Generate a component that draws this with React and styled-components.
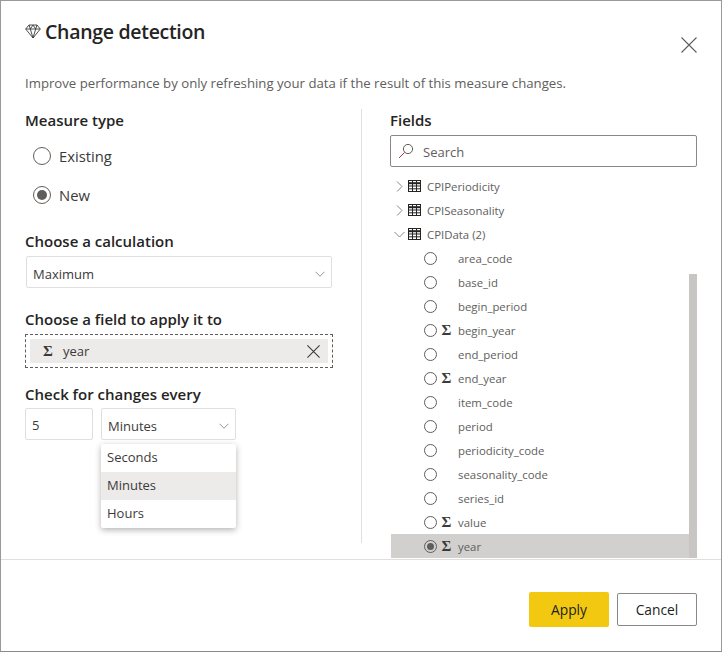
import React from "react";
import styled, { createGlobalStyle } from "styled-components";

const Global = createGlobalStyle`
  html, body { margin: 0; padding: 0; background: #fff; }
  body { font-family: "Open Sans", "Noto Sans", "Liberation Sans", sans-serif; }
`;

const Dialog = styled.div`
  box-sizing: border-box;
  width: 722px;
  height: 652px;
  border: 1px solid #999;
  border-bottom-color: #8a8a8a;
  background: #fff;
  display: flex;
  flex-direction: column;
  color: #252423;
  position: relative;
`;
const Header = styled.header`
  height: 49px;
  padding: 0 24px;
  display: flex;
  align-items: flex-end;
  gap: 4px;
`;
const Title = styled.h1`
  margin: 0;
  font-size: 19.5px;
  line-height: 28px;
  font-weight: 600;
  letter-spacing: -0.3px;
  height: 32px;
  color: #252423;
`;
const DiamondWrap = styled.span`
  display: flex;
  height: 23px;
  align-self: flex-start;
  margin-top: 23px;
`;
const CloseBtn = styled.button`
  position: absolute;
  right: 24px;
  top: 36px;
  width: 16px;
  height: 16px;
  padding: 0;
  border: 0;
  background: none;
  display: flex;
`;
const Description = styled.p`
  margin: 23px 24px 0;
  font-size: 13.2px;
  line-height: 20px;
  color: #605e5c;
`;
const Body = styled.div`
  display: grid;
  grid-template-columns: 361px 1fr;
  margin-top: 16px;
  height: 450px;
`;
const Left = styled.section`
  box-sizing: border-box;
  padding: 0 0 0 24px;
  height: 434px;
  width: 361px;
  border-right: 1px solid #e1dfdd;
`;
const Right = styled.section`
  padding-left: 28px;
  padding-right: 24px;
  position: relative;
`;
const Label = styled.h2`
  margin: ${p => p.$mt || 0}px 0 0;
  font-size: 15px;
  line-height: 22px;
  font-weight: 600;
  color: #252423;
`;
const RadioRow = styled.div`
  display: flex;
  align-items: center;
  gap: 8px;
  height: 20px;
  margin: ${p => p.$mt}px 0 0 8px;
  font-size: 14.8px;
  color: #3b3a39;
`;
const Radio = styled.span`
  box-sizing: border-box;
  flex: none;
  width: ${p => p.$size || 18}px;
  height: ${p => p.$size || 18}px;
  border-radius: 50%;
  border: 1.2px solid #605e5c;
  display: flex;
  align-items: center;
  justify-content: center;
  &::after {
    content: "";
    display: ${p => (p.$on ? "block" : "none")};
    width: ${p => (p.$size ? 7 : 10)}px;
    height: ${p => (p.$size ? 7 : 10)}px;
    border-radius: 50%;
    background: #605e5c;
  }
`;
const Select = styled.div`
  box-sizing: border-box;
  width: ${p => p.$w}px;
  height: 32px;
  margin: ${p => p.$mt || 0}px 0 0 ${p => p.$ml || 0}px;
  border: 1px solid #e1dfdd;
  border-radius: 2px;
  padding: 3px 6px 0;
  display: flex;
  align-items: center;
  justify-content: space-between;
  font-size: 13px;
  color: #3b3a39;
`;
const Well = styled.div`
  box-sizing: border-box;
  width: 308px;
  height: 34px;
  margin-top: 4px;
  border: 1px dashed #605e5c;
  padding: 4px;
`;
const Chip = styled.div`
  height: 24px;
  background: #edebe9;
  display: flex;
  align-items: center;
  padding: 0 8px 0 12px;
  font-size: 13px;
  color: #3b3a39;
  border-radius: 1px;
`;
const Sigma = styled.span`
  font-family: "Liberation Serif", "DejaVu Serif", serif;
  font-size: 15px;
  line-height: 1;
  font-weight: 700;
  color: #3b3a39;
  width: ${p => p.$w}px;
  text-align: center;
  flex: none;
`;
const ChipText = styled.span`
  margin-left: 9px;
  flex: 1;
`;
const IntervalRow = styled.div`
  display: flex;
  gap: 8px;
  margin-top: 3px;
`;
const NumberBox = styled.div`
  box-sizing: border-box;
  width: 68px;
  height: 32px;
  border: 1px solid #e1dfdd;
  border-radius: 2px;
  padding: 2px 6px 0;
  display: flex;
  align-items: center;
  font-size: 13px;
  color: #3b3a39;
`;
const Menu = styled.ul`
  position: absolute;
  left: 100px;
  top: 443px;
  width: 135px;
  margin: 0;
  padding: 0;
  list-style: none;
  background: #fff;
  border-radius: 2px;
  box-shadow: 0 2px 6px rgba(0,0,0,.3);
`;
const MenuItem = styled.li`
  box-sizing: border-box;
  height: 28px;
  padding: 0 6px 2px;
  display: flex;
  align-items: center;
  font-size: 13px;
  color: #3b3a39;
  background: ${p => (p.$active ? "#edebe9" : "transparent")};
`;
const Search = styled.div`
  box-sizing: border-box;
  height: 32px;
  margin-top: 4px;
  width: 307px;
  border: 1px solid #8a8886;
  border-radius: 2px;
  display: flex;
  align-items: center;
  padding-left: 7px;
  gap: 9px;
  font-size: 13px;
  color: #605e5c;
`;
const SearchText = styled.span`
  padding-top: 2px;
`;
const Tree = styled.div`
  margin-top: 7px;
  width: 307px;
`;
const Row = styled.div`
  height: 24px;
  display: flex;
  align-items: center;
  width: 298px;
  margin-left: 1px;
  font-size: 11.4px;
  color: #605e5c;
  background: ${p => (p.$sel ? "#d2d0ce" : "transparent")};
`;
const GroupRow = styled(Row)`
  padding-left: 3px;
  box-sizing: border-box;
  gap: 3px;
`;
const GroupName = styled.span`
  margin-left: 3px;
`;
const Expander = styled.span`
  width: 11px;
  display: flex;
  justify-content: center;
  flex: none;
`;
const FieldRow = styled(Row)`
  box-sizing: border-box;
  padding-left: 33px;
`;
const FieldIcon = styled.span`
  width: 11px;
  margin-left: 4px;
  flex: none;
  display: flex;
  justify-content: center;
`;
const FieldName = styled.span`
  margin-left: 6px;
`;
const ScrollThumb = styled.div`
  position: absolute;
  left: 327px;
  top: 165px;
  width: 8px;
  height: 284px;
  background: #c8c6c4;
`;
const Footer = styled.footer`
  border-top: 1px solid #e1dfdd;
  flex: 1;
  display: flex;
  justify-content: flex-end;
  align-items: flex-start;
  gap: 8px;
  padding: 32px 24px 0 0;
`;
const Button = styled.button`
  box-sizing: border-box;
  width: 80px;
  height: ${p => (p.$primary ? 35 : 33)}px;
  margin-top: ${p => (p.$primary ? 0 : 1)}px;
  border: ${p => (p.$primary ? "0" : "1px solid #8a8886")};
  border-radius: 2px;
  background: ${p => (p.$primary ? "#f2c811" : "#fff")};
  font: 13.8px "Open Sans", sans-serif;
  color: #201f1e;
  padding: 0;
`;

const Chevron = ({ dir, size = 11, color = "#8a8886" }) => (
  <svg width={size} height={size} viewBox="0 0 11 11" fill="none" stroke={color} strokeWidth="1">
    {dir === "right" ? <path d="M3 0.5 L8 5.5 L3 10.5" /> : <path d="M0.5 3 L5.5 8 L10.5 3" />}
  </svg>
);
const Cross = ({ size = 16, color = "#3b3a39", w = 1.1 }) => (
  <svg width={size} height={size} viewBox="0 0 16 16" fill="none" stroke={color} strokeWidth={w}>
    <path d="M0.5 0.5 L15.5 15.5 M15.5 0.5 L0.5 15.5" />
  </svg>
);
const TableIcon = () => (
  <svg width="13" height="12" viewBox="0 0 13 12" fill="none" stroke="#252423" strokeWidth="1">
    <rect x="0.5" y="0.5" width="12" height="11" />
    <path d="M0 3.2 H13" strokeWidth="2" />
    <path d="M0.5 6 H12.5 M0.5 8.8 H12.5 M4.5 0.5 V11.5 M8.5 0.5 V11.5" />
  </svg>
);
const Diamond = () => (
  <svg width="16" height="15" viewBox="0 0 16 15" fill="none" stroke="#3b3a39" strokeWidth="0.9">
    <path d="M4 1 H12 L15.3 5 L8 14 L0.7 5 Z M0.7 5 H15.3 M4 1 L5.3 5 L8 14 L10.7 5 L12 1 M5.3 5 L8 1 L10.7 5" />
  </svg>
);
const SearchIcon = () => (
  <svg width="16" height="16" viewBox="0 0 16 16" fill="none" stroke="#a4373a" strokeWidth="1">
    <circle cx="10" cy="6" r="4.6" stroke="#605e5c" />
    <path d="M6.6 9.4 L1 15" />
  </svg>
);

const fields = [
  ["area_code"], ["base_id"], ["begin_period"], ["begin_year", true], ["end_period"],
  ["end_year", true], ["item_code"], ["period"], ["periodicity_code"], ["seasonality_code"],
  ["series_id"], ["value", true], ["year", true, true],
];

export default function App() {
  return (
    <>
      <Global />
      <Dialog>
        <Header>
          <DiamondWrap><Diamond /></DiamondWrap>
          <Title>Change detection</Title>
        </Header>
        <CloseBtn aria-label="Close"><Cross size={16} color="#605e5c" w={1.1} /></CloseBtn>
        <Description>Improve performance by only refreshing your data if the result of this measure changes.</Description>
        <Body>
          <Left>
            <Label>Measure type</Label>
            <RadioRow $mt={15}><Radio />Existing</RadioRow>
            <RadioRow $mt={19}><Radio $on />New</RadioRow>
            <Label $mt={25}>Choose a calculation</Label>
            <Select $w={306} $ml={1} $mt={4}>Maximum<Chevron size={10} /></Select>
            <Label $mt={20}>Choose a field to apply it to</Label>
            <Well>
              <Chip>
                <Sigma $w={12}>Σ</Sigma>
                <ChipText>year</ChipText>
                <Cross size={13} w={1.3} />
              </Chip>
            </Well>
            <Label $mt={15}>Check for changes every</Label>
            <IntervalRow>
              <NumberBox>5</NumberBox>
              <Select $w={135}>Minutes<Chevron size={10} /></Select>
            </IntervalRow>
          </Left>
          <Right>
            <Label>Fields</Label>
            <Search><SearchIcon /><SearchText>Search</SearchText></Search>
            <Tree>
              <GroupRow><Expander><Chevron dir="right" /></Expander><TableIcon /><GroupName>CPIPeriodicity</GroupName></GroupRow>
              <GroupRow><Expander><Chevron dir="right" /></Expander><TableIcon /><GroupName>CPISeasonality</GroupName></GroupRow>
              <GroupRow><Expander><Chevron /></Expander><TableIcon /><GroupName>CPIData (2)</GroupName></GroupRow>
              {fields.map(([name, sum, sel]) => (
                <FieldRow key={name} $sel={sel}>
                  <Radio $size={13} $on={sel} />
                  <FieldIcon>{sum && <Sigma $w={11}>Σ</Sigma>}</FieldIcon>
                  <FieldName>{name}</FieldName>
                </FieldRow>
              ))}
            </Tree>
            <ScrollThumb />
          </Right>
        </Body>
        <Footer>
          <Button $primary>Apply</Button>
          <Button>Cancel</Button>
        </Footer>
        <Menu>
          <MenuItem>Seconds</MenuItem>
          <MenuItem $active>Minutes</MenuItem>
          <MenuItem>Hours</MenuItem>
        </Menu>
      </Dialog>
    </>
  );
}
